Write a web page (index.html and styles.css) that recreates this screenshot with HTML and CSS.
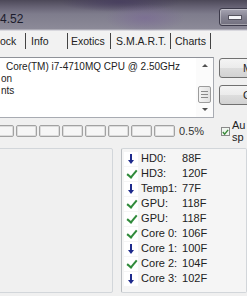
FILE: index.html
```html
<!DOCTYPE html>
<html lang="en">
<head>
  <meta charset="UTF-8" />
  <title>Real Temp 4.52</title>
  <link rel="stylesheet" href="styles.css">
</head>
<body>

  <!-- Title bar -->
  <div class="titlebar">
    <div class="title">4.52</div>
    <div class="min-btn"><span></span></div>
  </div>

  <!-- Tabs -->
  <div class="tabs">
    <div class="tab tab-clock">Clock</div>
    <div class="tab tab-info">Info</div>
    <div class="tab tab-exotics">Exotics</div>
    <div class="tab tab-smart">S.M.A.R.T.</div>
    <div class="tab tab-charts">Charts</div>
  </div>

  <!-- Info box + buttons -->
  <div class="main">
    <div class="left">
      <div class="textbox">
        <div class="lines">
          <div class="line first">Core(TM) i7-4710MQ CPU @ 2.50GHz</div>
          <div class="line">on</div>
          <div class="line">nts</div>
        </div>
        <div class="scrollbar">
          <div class="arrow up"></div>
          <div class="thumb"><i></i><i></i><i></i></div>
          <div class="arrow down"></div>
        </div>
      </div>
      <div class="progress">
        <div class="seg"></div><div class="seg"></div><div class="seg"></div><div class="seg"></div>
        <div class="seg"></div><div class="seg"></div><div class="seg"></div><div class="seg"></div>
        <span class="pct">0.5%</span>
      </div>
    </div>
    <div class="side">
      <div class="btn">Minimize</div>
      <div class="btn">Close</div>
      <div class="check">
        <div class="box">
          <svg width="8" height="8" viewBox="0 0 8 8"><path d="M1 4 L3 6.5 L7 1.5" fill="none" stroke="#3a8a3a" stroke-width="1.6"/></svg>
        </div>
        <div class="check-text">Au<br>sp</div>
      </div>
    </div>
  </div>

  <!-- Panels -->
  <div class="panels">
    <div class="panel panel-left"></div>
    <div class="panel panel-right">
      <div class="row"><span class="ico down"></span><span class="lbl">HD0:</span><span class="val">88F</span></div>
      <div class="row"><span class="ico ok"></span><span class="lbl">HD3:</span><span class="val">120F</span></div>
      <div class="row"><span class="ico down"></span><span class="lbl">Temp1:</span><span class="val">77F</span></div>
      <div class="row"><span class="ico ok"></span><span class="lbl">GPU:</span><span class="val">118F</span></div>
      <div class="row"><span class="ico ok"></span><span class="lbl">GPU:</span><span class="val">118F</span></div>
      <div class="row"><span class="ico ok"></span><span class="lbl">Core 0:</span><span class="val">106F</span></div>
      <div class="row"><span class="ico down"></span><span class="lbl">Core 1:</span><span class="val">100F</span></div>
      <div class="row"><span class="ico ok"></span><span class="lbl">Core 2:</span><span class="val">104F</span></div>
      <div class="row"><span class="ico down"></span><span class="lbl">Core 3:</span><span class="val">102F</span></div>
    </div>
  </div>

</body>
</html>
```

FILE: styles.css
```css
* { margin: 0; padding: 0; box-sizing: border-box; }
html, body {
  width: 247px;
  height: 296px;
  background: #f0f0f0;
  font-family: "Liberation Sans", Arial, sans-serif;
  font-size: 11px;
  color: #222;
  overflow: hidden;
}

/* Title bar */
.titlebar {
  height: 31px;
  display: flex;
  align-items: flex-start;
  background:
    radial-gradient(ellipse 40px 14px at 145px 18px, rgba(120, 100, 150, 0.55), transparent),
    radial-gradient(ellipse 60px 10px at 120px 2px, rgba(70, 60, 95, 0.8), transparent),
    linear-gradient(#4c4858 0px, #6a6678 8px, #7e7c8c 14px, #8c8a98 29px, #c9c8d0 30px, #e8e8ec 31px);
}
.title {
  margin-top: 12px;
  font-size: 12px;
  color: #1c1c2c;
}
.min-btn {
  margin-left: auto;
  margin-top: 8px;
  margin-right: -4px;
  width: 32px;
  height: 18px;
  border: 1px solid #3c3a4a;
  border-radius: 3px;
  background: linear-gradient(#a6a4b2, #858392 50%, #72707e);
  box-shadow: inset 0 0 0 1px rgba(255, 255, 255, 0.35);
  display: flex;
  align-items: center;
  padding-left: 8px;
}
.min-btn span {
  width: 12px;
  height: 3px;
  background: #f4f4f8;
  border: 1px solid #55535f;
  box-sizing: content-box;
}

/* Tabs */
.tabs {
  display: flex;
  height: 19px;
  margin-left: -14px;
  align-items: center;
  background: #f2f2f2;
  font-size: 10.5px;
}
.tab {
  height: 16px;
  line-height: 17px;
  border-right: 1px solid #444;
  white-space: nowrap;
}
.tab-clock { width: 40px; padding-left: 4px; }
.tab-info { width: 42px; padding-left: 5px; }
.tab-exotics { width: 43px; padding-left: 3px; }
.tab-smart { width: 60px; padding-left: 5px; }
.tab-charts { width: 40px; padding-left: 4px; }

/* Main area */
.main {
  display: flex;
  margin-top: 7px;
}
.left {
  width: 219px;
  flex-shrink: 0;
}
.textbox {
  margin-left: -3px;
  width: 217px;
  height: 61px;
  background: #fff;
  border: 1px solid #a8abb2;
  border-top-color: #8e9198;
  display: flex;
}
.lines {
  flex: 1;
  padding-top: 3px;
  overflow: hidden;
  font-size: 10px;
}
.line {
  height: 12px;
  line-height: 12px;
  padding-left: 3px;
  white-space: nowrap;
}
.line.first { padding-left: 8px; }
.scrollbar {
  width: 17px;
  display: flex;
  flex-direction: column;
  align-items: center;
  background: #fbfbfb;
  padding-top: 6px;
}
.arrow {
  width: 0;
  height: 0;
  border-left: 3px solid transparent;
  border-right: 3px solid transparent;
}
.arrow.up { border-bottom: 3px solid #505050; }
.arrow.down { border-top: 3px solid #505050; margin-top: 5px; }
.thumb {
  margin-top: 19px;
  width: 13px;
  height: 17px;
  border: 1px solid #9c9c9c;
  border-radius: 2px;
  background: linear-gradient(90deg, #f4f4f4, #e2e2e2);
  display: flex;
  flex-direction: column;
  align-items: center;
  justify-content: center;
  gap: 2px;
}
.thumb i {
  display: block;
  width: 7px;
  height: 1px;
  background: #8a8a8a;
}

.progress {
  display: flex;
  align-items: center;
  margin-top: 7px;
  margin-left: -7px;
  gap: 2px;
  height: 12px;
}
.seg {
  width: 21px;
  height: 12px;
  border: 1px solid #a2a2a2;
  border-radius: 2px;
  background: #f6f6f6;
  box-shadow: inset 0 0 0 1px #dcdcdc;
  flex-shrink: 0;
}
.pct {
  margin-left: 2px;
  color: #333;
}

.side {
  display: flex;
  flex-direction: column;
  gap: 7px;
  padding-top: 1px;
}
.btn {
  width: 34px;
  height: 20px;
  line-height: 18px;
  padding-left: 23px;
  border: 1px solid #707070;
  border-radius: 3px;
  background: linear-gradient(#f4f4f4, #ebebeb 50%, #dddddd 51%, #d2d2d2);
  white-space: nowrap;
  overflow: hidden;
}
.check {
  display: flex;
  margin-top: 7px;
  margin-left: 2px;
}
.box {
  margin-top: 8px;
  width: 9px;
  height: 9px;
  border: 1px solid #8a8a8a;
  background: #f0f6f0;
  display: flex;
  align-items: center;
  justify-content: center;
}
.check-text {
  margin-left: 2px;
  line-height: 12px;
}

/* Panels */
.panels {
  display: flex;
  gap: 8px;
  margin-top: 5px;
  height: 145px;
}
.panel {
  border: 1px solid #d2d6da;
  border-radius: 2px;
}
.panel-left {
  margin-left: -5px;
  width: 122px;
  background: #f0f0f0;
}
.panel-right {
  width: 130px;
  background: #f5f5f5;
  border-left-color: #b8bcc0;
  padding-top: 2px;
  padding-left: 2px;
}
.row {
  display: flex;
  align-items: center;
  height: 15px;
  line-height: 15px;
}
.ico {
  width: 14px;
  height: 14px;
  background: #fff;
  position: relative;
  flex-shrink: 0;
}
.ico.down::before {
  content: "";
  position: absolute;
  left: 6px;
  top: 2px;
  width: 2px;
  height: 7px;
  background: #1e2a8c;
}
.ico.down::after {
  content: "";
  position: absolute;
  left: 4px;
  top: 8px;
  border-left: 3px solid transparent;
  border-right: 3px solid transparent;
  border-top: 4px solid #1e2a8c;
}
.ico.ok::before {
  content: "";
  position: absolute;
  left: 5px;
  top: 1px;
  width: 4px;
  height: 8px;
  border-right: 2px solid #2f8a3a;
  border-bottom: 2px solid #2f8a3a;
  transform: rotate(40deg);
}
.lbl {
  margin-left: 3px;
  width: 41px;
  white-space: nowrap;
}
.val { color: #222; }
```
